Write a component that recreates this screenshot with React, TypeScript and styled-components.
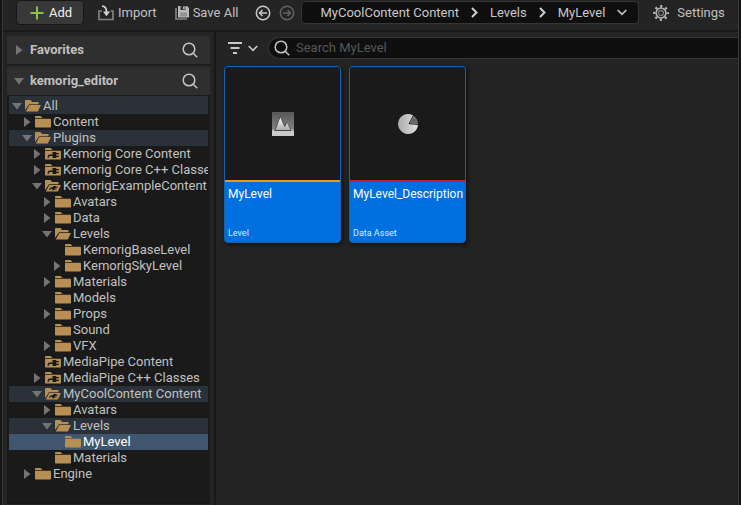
import React from "react";
import styled, { createGlobalStyle, css } from "styled-components";

const GlobalStyle = createGlobalStyle`
  *, *::before, *::after { box-sizing: border-box; }
  body {
    margin: 0;
    background: #151515;
    color: #c0c0c0;
    font: 13px/16px Roboto, "Liberation Sans", sans-serif;
  }
  button, input { font: inherit; color: inherit; }
  svg { display: block; flex: none; }
`;

const Window = styled.div`
  display: flex;
  flex-direction: column;
  min-height: 100vh;
  margin: 0 2px;
  border: solid #383838;
  border-width: 0 1px;
  background: #242424;
`;

const Toolbar = styled.header`
  display: flex;
  align-items: center;
  height: 32px;
  padding: 0 4px 5px 13px;
  border-bottom: 2px solid #1a1a1a;
  white-space: nowrap;
`;

const PlainButton = styled.button`
  display: flex;
  flex: none;
  align-items: center;
  padding: 0;
  border: 0;
  background: none;
  cursor: pointer;
`;

const AddButton = styled(PlainButton)`
  gap: 5px;
  width: 68px;
  height: 25px;
  padding-left: 13px;
  border: 1px solid #161616;
  border-radius: 4px;
  background: #383838;
  color: #f0f0f0;
`;

const ToolButton = styled(PlainButton)<{ $before: number; $gap: number }>`
  gap: ${(p) => p.$gap}px;
  margin-left: ${(p) => p.$before}px;
`;

const Breadcrumbs = styled.nav`
  display: flex;
  flex: none;
  align-items: center;
  gap: 12px;
  height: 23px;
  margin-left: 6px;
  padding: 0 11px 0 18px;
  border: 1px solid #363636;
  border-radius: 4px;
  background: #0f0f0f;
`;

const Crumb = styled.a`
  color: #c8c8c8;
  text-decoration: none;
`;

const Body = styled.div`
  display: flex;
  flex: 1;
`;

const Sidebar = styled.aside`
  display: flex;
  flex: none;
  flex-direction: column;
  gap: 2px;
  width: 213px;
  padding: 4px 4px 1px 4px;
  border-right: 2px solid #181818;
`;

const SectionHeader = styled.div`
  display: flex;
  align-items: center;
  justify-content: space-between;
  height: 29px;
  padding: 0 12px 0 7px;
  background: #2f2f2f;
  border-bottom: 1px solid #1a1a1a;
`;

const SectionToggle = styled(PlainButton)`
  gap: 3px;
  font-weight: 700;
`;

const Section = styled.section`
  display: flex;
  flex: 1;
  flex-direction: column;
`;

const Tree = styled.ul`
  flex: 1;
  margin: 0;
  padding: 0 2px 16px;
  border-bottom: 2px solid #161616;
  background: #1a1a1a;
  list-style: none;
`;

const TreeRow = styled(PlainButton)<{ $depth: number; $state?: "path" | "selected" }>`
  width: 100%;
  height: 16px;
  padding-left: ${(p) => 3 + p.$depth * 10}px;
  overflow: hidden;
  white-space: nowrap;
  ${(p) => p.$depth === 0 && css`height: 18px; padding-top: 2px;`}
  ${(p) => p.$state === "path" && css`background: #2b3139;`}
  ${(p) => p.$state === "selected" && css`background: #40566f; color: #fff;`}
`;

const ArrowSlot = styled.span`
  display: flex;
  flex: none;
  justify-content: center;
  width: 10px;
  margin-right: 3px;
`;

const RowLabel = styled.span`
  min-width: 0;
  margin-left: 2px;
  overflow: hidden;
`;

const Main = styled.main`
  flex: 1;
  min-width: 0;
  padding-top: 5px;
`;

const FilterBar = styled.div`
  display: flex;
  align-items: center;
  padding-left: 12px;
`;

const FilterButton = styled(PlainButton)`
  gap: 6px;
  margin-right: 10px;
`;

const SearchBox = styled.label`
  display: flex;
  flex: 1;
  align-items: center;
  gap: 6px;
  height: 22px;
  padding-left: 5px;
  border: 1px solid #363636;
  border-right: 0;
  border-radius: 11px 0 0 11px;
  background: #0f0f0f;
`;

const SearchInput = styled.input`
  flex: 1;
  min-width: 0;
  padding: 0;
  border: 0;
  outline: 0;
  background: none;
  &::placeholder { color: #575757; opacity: 1; }
`;

const AssetGrid = styled.div`
  display: grid;
  grid-template-columns: repeat(auto-fill, 117px);
  gap: 8px;
  padding: 7px 8px;
`;

const AssetTile = styled.button`
  display: flex;
  flex-direction: column;
  height: 177px;
  padding: 0;
  overflow: hidden;
  border: 1px solid #1462ae;
  border-radius: 4px;
  background: #0070e0;
  box-shadow: 2px 2px 4px #111;
  color: #fff;
  text-align: left;
  cursor: pointer;
`;

const Thumbnail = styled.span<{ $accent: string }>`
  display: flex;
  flex: none;
  align-items: center;
  justify-content: center;
  width: 100%;
  height: 115px;
  border-bottom: 2px solid ${(p) => p.$accent};
  background: #1a1a1a;
`;

const AssetName = styled.span`
  flex: 1;
  padding: 4px 3px;
  font-size: 12px;
  white-space: nowrap;
`;

const AssetType = styled.span`
  padding: 0 3px 3px;
  font-size: 9px;
  line-height: 12px;
  color: #d9eaff;
`;

const Arrow = ({ open }: { open: boolean }) =>
  open ? (
    <svg width="10" height="7" viewBox="0 0 10 7"><path d="M0 0h10L5 6.5z" fill="#747474" /></svg>
  ) : (
    <svg width="7" height="10" viewBox="0 0 7 10"><path d="M0 0l6.5 5L0 10z" fill="#747474" /></svg>
  );

const SearchIcon = () => (
  <svg width="16" height="16" viewBox="0 0 16 16" fill="none" stroke="#c4c4c4" strokeWidth="1.5">
    <circle cx="7" cy="7" r="5.8" /><path d="M11.2 11.2L15.2 15.2" />
  </svg>
);

const Chevron = ({ down = false }: { down?: boolean }) =>
  down ? (
    <svg width="10" height="7" viewBox="0 0 10 7" fill="none" stroke="#c4c4c4" strokeWidth="1.7"><path d="M.7 1L5 5.3 9.3 1" /></svg>
  ) : (
    <svg width="7" height="11" viewBox="0 0 7 11" fill="none" stroke="#d0d0d0" strokeWidth="2"><path d="M1 1l4.5 4.5L1 10" /></svg>
  );

const PlusIcon = () => (
  <svg width="14" height="14" viewBox="0 0 14 14"><path d="M7 .5v13M.5 7h13" stroke="#8bc24a" strokeWidth="2" /></svg>
);

const ImportIcon = () => (
  <svg width="16" height="16" viewBox="0 0 16 16" fill="none">
    <path d="M4 6H1v8.500h14V6h-2.500" stroke="#828282" strokeWidth="1.7" />
    <path d="M4 1.200C7.500 1.200 8.500 3 8.500 7" stroke="#d0d0d0" strokeWidth="1.8" />
    <path d="M5 6.500h7l-3.500 4.800z" fill="#d0d0d0" />
  </svg>
);

const SaveIcon = () => (
  <svg width="14" height="14" viewBox="0 0 14 14">
    <path d="M1 2v11h11" fill="none" stroke="#858585" strokeWidth="1.6" />
    <path d="M3 0h9l2 2v9.5H3z" fill="#b8b8b8" />
    <path d="M5.5 0h5v4h-5z" fill="#333" /><path d="M8.2.6h1.5v2.6H8.2z" fill="#d0d0d0" />
    <path d="M5 6.5h7v4H5z" fill="#929292" />
  </svg>
);

const CircleArrow = ({ forward = false }: { forward?: boolean }) => (
  <svg width="16" height="16" viewBox="0 0 16 16" fill="none" stroke={forward ? "#626262" : "#c8c8c8"} strokeWidth="1.5">
    <circle cx="8" cy="8" r="6.7" />
    <path d={forward ? "M4 8h7.3M8.5 5l3 3-3 3" : "M12 8H4.700M7.500 5l-3 3 3 3"} />
  </svg>
);

const GearIcon = () => (
  <svg width="16" height="16" viewBox="0 0 16 16" fill="none" stroke="#b8b8b8">
    <circle cx="8" cy="8" r="6.7" strokeWidth="2.4" strokeDasharray="2.1 3.162" strokeDashoffset="1.05" />
    <circle cx="8" cy="8" r="4.9" strokeWidth="1.5" />
    <circle cx="8" cy="8" r="2.5" stroke="#777" strokeWidth="1.3" />
  </svg>
);

const FilterIcon = () => (
  <svg width="14" height="12" viewBox="0 0 14 12" fill="#c8c8c8">
    <path d="M0 0h14v2H0zM2.5 5h9v2h-9zM5 10h4v2H5z" />
  </svg>
);

const Plug = ({ open }: { open: boolean }) =>
  open ? (
    <path
      d="M3.800 9.800C4.800 7.800 5.800 7.300 7.300 7.300L8.800 6h2.600l-.4.800h2l-.5.900h-2l-.5 1h2l-.5.900h-2l-.4.600H7l.4-1.500C6 8.700 5.500 9.200 5 9.800z"
      fill="#191919"
    />
  ) : (
    <path
      d="M7.500 4h3.800v1H14v1.200h-2.700v1.600H14V9h-2.700v1H7.500V8H5C4.200 8 4 8.500 4 9.800H2.500C2.500 7.700 3.300 6.500 4.800 6.500h2.700z"
      fill="#191919"
    />
  );

const FolderIcon = ({ open, plugin }: { open: boolean; plugin: boolean }) => (
  <svg width="16" height="12" viewBox="0 0 16 12" fill="#b88f52">
    {open ? (
      <>
        <path d="M0 10V.8C0 .3.300 0 .8 0H5.500L7 2h6.500v2.200H4z" />
        <path d="M4.300 5H16L12.800 11.500H0.800z" />
      </>
    ) : (
      <>
        <path d="M0 1.200C0 .4.400 0 1 0h4.500L7.500 2H0z" />
        <path d="M0 2.800h15.200c.5 0 .8.300.8.800v7.100c0 .5-.3.800-.8.800H.8C.3 11.500 0 11.200 0 10.700z" />
      </>
    )}
    {plugin && <Plug open={open} />}
  </svg>
);

const LevelIcon = () => (
  <svg width="22" height="24" viewBox="0 0 22 24">
    <defs>
      <linearGradient id="sky" x2="0" y2="1"><stop stopColor="#585858" /><stop offset="1" stopColor="#929292" /></linearGradient>
      <linearGradient id="peak" x2="0" y2="1"><stop stopColor="#fff" /><stop offset="1" stopColor="#aaa" /></linearGradient>
    </defs>
    <path d="M0 0h22v24H0z" fill="url(#sky)" />
    <path d="M0 19l2-2h18l2 2v5H0z" fill="#c9c9c9" />
    <path d="M2 19L8.200 4l4.600 9 2-3L20 19z" fill="#484848" />
    <path d="M3.500 18L8.300 5.500l4.500 10L15 10.800l3.500 7.200z" fill="url(#peak)" />
  </svg>
);

const DataIcon = () => (
  <svg width="20" height="20" viewBox="0 0 20 20">
    <defs><linearGradient id="disc"><stop stopColor="#aaa" /><stop offset="1" stopColor="#e0e0e0" /></linearGradient></defs>
    <path d="M10.500 10L15 1.300A10 10 0 1 0 20 11z" fill="url(#disc)" />
    <path d="M12.300 8.900L15.700 2.200A9.500 9.500 0 0 1 19.400 9.800z" fill="#666" stroke="#858585" strokeWidth=".8" />
  </svg>
);

type Node = {
  name: string;
  depth: number;
  arrow?: "open" | "closed";
  plugin?: boolean;
  state?: "path" | "selected";
};

const nodes: Node[] = [
  { name: "All", depth: 0, arrow: "open", state: "path" },
  { name: "Content", depth: 1, arrow: "closed" },
  { name: "Plugins", depth: 1, arrow: "open", state: "path" },
  { name: "Kemorig Core Content", depth: 2, arrow: "closed", plugin: true },
  { name: "Kemorig Core C++ Classes", depth: 2, arrow: "closed", plugin: true },
  { name: "KemorigExampleContent Content", depth: 2, arrow: "open", plugin: true },
  { name: "Avatars", depth: 3, arrow: "closed" },
  { name: "Data", depth: 3, arrow: "closed" },
  { name: "Levels", depth: 3, arrow: "open" },
  { name: "KemorigBaseLevel", depth: 4 },
  { name: "KemorigSkyLevel", depth: 4, arrow: "closed" },
  { name: "Materials", depth: 3, arrow: "closed" },
  { name: "Models", depth: 3 },
  { name: "Props", depth: 3, arrow: "closed" },
  { name: "Sound", depth: 3 },
  { name: "VFX", depth: 3, arrow: "closed" },
  { name: "MediaPipe Content", depth: 2, plugin: true },
  { name: "MediaPipe C++ Classes", depth: 2, arrow: "closed", plugin: true },
  { name: "MyCoolContent Content", depth: 2, arrow: "open", plugin: true, state: "path" },
  { name: "Avatars", depth: 3, arrow: "closed" },
  { name: "Levels", depth: 3, arrow: "open", state: "path" },
  { name: "MyLevel", depth: 4, state: "selected" },
  { name: "Materials", depth: 3 },
  { name: "Engine", depth: 1, arrow: "closed" },
];

export default function App() {
  return (
    <>
      <GlobalStyle />
      <Window>
        <Toolbar>
          <AddButton><PlusIcon />Add</AddButton>
          <ToolButton $before={14} $gap={4}><ImportIcon />Import</ToolButton>
          <ToolButton $before={18} $gap={4}><SaveIcon />Save All</ToolButton>
          <ToolButton $before={17} $gap={0} aria-label="Back"><CircleArrow /></ToolButton>
          <ToolButton $before={8} $gap={0} aria-label="Forward" disabled><CircleArrow forward /></ToolButton>
          <Breadcrumbs aria-label="Path">
            <Crumb href="#content">MyCoolContent Content</Crumb>
            <Chevron />
            <Crumb href="#levels">Levels</Crumb>
            <Chevron />
            <Crumb href="#mylevel">MyLevel</Crumb>
            <PlainButton aria-label="Show subfolders"><Chevron down /></PlainButton>
          </Breadcrumbs>
          <ToolButton $before={14} $gap={8}><GearIcon />Settings</ToolButton>
        </Toolbar>
        <Body>
          <Sidebar>
            <SectionHeader>
              <SectionToggle><ArrowSlot><Arrow open={false} /></ArrowSlot>Favorites</SectionToggle>
              <PlainButton aria-label="Search favorites"><SearchIcon /></PlainButton>
            </SectionHeader>
            <Section>
              <SectionHeader>
                <SectionToggle><ArrowSlot><Arrow open /></ArrowSlot>kemorig_editor</SectionToggle>
                <PlainButton aria-label="Search folders"><SearchIcon /></PlainButton>
              </SectionHeader>
              <Tree>
                {nodes.map((n, i) => (
                  <li key={i}>
                    <TreeRow $depth={n.depth} $state={n.state}>
                      <ArrowSlot>{n.arrow && <Arrow open={n.arrow === "open"} />}</ArrowSlot>
                      <FolderIcon open={n.arrow === "open"} plugin={!!n.plugin} />
                      <RowLabel>{n.name}</RowLabel>
                    </TreeRow>
                  </li>
                ))}
              </Tree>
            </Section>
          </Sidebar>
          <Main>
            <FilterBar>
              <FilterButton aria-label="Filters"><FilterIcon /><Chevron down /></FilterButton>
              <SearchBox><SearchIcon /><SearchInput aria-label="Search MyLevel" placeholder="Search MyLevel" /></SearchBox>
            </FilterBar>
            <AssetGrid>
              <AssetTile>
                <Thumbnail $accent="#e59a1c"><LevelIcon /></Thumbnail>
                <AssetName>MyLevel</AssetName>
                <AssetType>Level</AssetType>
              </AssetTile>
              <AssetTile>
                <Thumbnail $accent="#b91f4c"><DataIcon /></Thumbnail>
                <AssetName>MyLevel_Description</AssetName>
                <AssetType>Data Asset</AssetType>
              </AssetTile>
            </AssetGrid>
          </Main>
        </Body>
      </Window>
    </>
  );
}
